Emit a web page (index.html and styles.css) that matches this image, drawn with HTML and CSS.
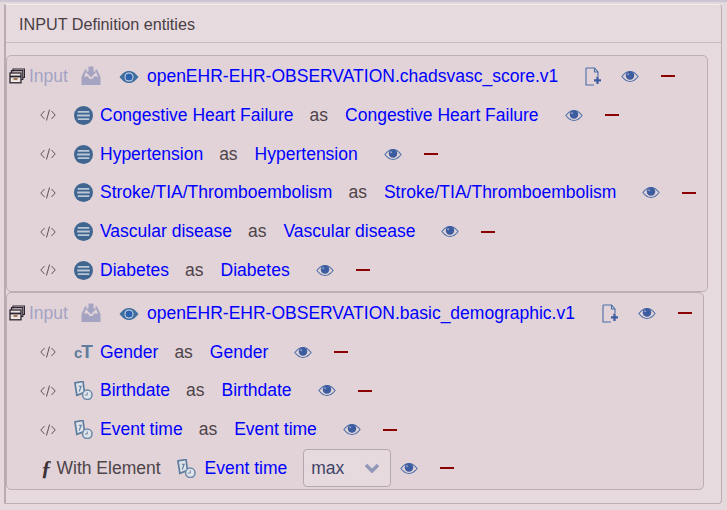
FILE: index.html
```html
<!DOCTYPE html>
<html lang="en">
<head>
    <meta charset="UTF-8">
    <title>INPUT Definition entities</title>
    <link rel="stylesheet" href="styles.css">
</head>
<body>
    <svg class="sprites" width="0" height="0">
        <symbol id="i-archive" viewBox="0 0 16 16">
            <path d="M4 3.500V1H15.500V9.500H13.500M2.500 5V2.700H13.800V11.500H12" fill="none" stroke="#2b2530" stroke-width="1.200"/>
            <rect x="1" y="5" width="11" height="9.800" fill="#efe6e2" stroke="#2b2530" stroke-width="1.300"/>
            <path d="M1 8.500H12" stroke="#2b2530" stroke-width="1.800"/>
            <path d="M4.500 11H8.500" stroke="#7a4a20" stroke-width="1.400"/>
        </symbol>
        <symbol id="i-download" viewBox="0 0 20 20">
            <path d="M7.500 .5H12.500V5.500H15.500L10 11.500L4.500 5.500H7.500Z" fill="#a5a3c2"/>
            <path d="M4 3.500H6L3 10.500H7L8.500 13H11.500L13 10.500H17L14 3.500H16L19.500 11V19H.5V11Z" fill="#a5a3c2"/>
        </symbol>
        <symbol id="i-eye" viewBox="0 0 20 14">
            <path d="M1 7C4 3 7 1.500 10 1.500S16 3 19 7C16 11 13 12.500 10 12.500S4 11 1 7Z" fill="none" stroke="#4a6ea8" stroke-width="1.200"/>
            <circle cx="10" cy="6" r="4.700" fill="#3c5ca0"/>
            <circle cx="8" cy="4.500" r="1.200" fill="#8f9cc8"/>
        </symbol>
        <symbol id="i-eye-full" viewBox="0 0 20 14">
            <path d="M.5 7C4 2.500 7 1 10 1S16 2.500 19.500 7C16 11.500 13 13 10 13S4 11.500 .5 7Z" fill="#3f6f9f"/>
            <circle cx="10" cy="7" r="4.500" fill="#d4dbe6"/>
            <circle cx="10" cy="7" r="3.500" fill="#2a62b0"/>
        </symbol>
        <symbol id="i-docplus" viewBox="0 0 16 19">
            <path d="M1 1H9.500L13 5V9M9.500 1V5H13M9 18H1V1" fill="none" stroke="#4a6ea8" stroke-width="1.100"/>
            <path d="M12.500 9.500V17M9 13.300H16" stroke="#3c5ca0" stroke-width="2.200"/>
        </symbol>
        <symbol id="i-code" viewBox="0 0 16 12">
            <path d="M4.500 2L.8 6L4.500 10M11.500 2L15.200 6L11.500 10M9.500 .5L6.500 11.500" fill="none" stroke="#5f5258" stroke-width="1"/>
        </symbol>
        <symbol id="i-list" viewBox="0 0 18 18">
            <circle cx="9" cy="9" r="9" fill="#3f6590"/>
            <path d="M3.500 5.500H14.500M3 9H15M3.500 12.500H14.500" stroke="#b9c6d6" stroke-width="1.700"/>
        </symbol>
        <symbol id="i-date" viewBox="0 0 20 20">
            <path d="M1 2L9.500 .5L11 12L3 15Z" fill="#dfe3ea" stroke="#5f7d9e" stroke-width="1.800"/>
            <path d="M5 5.500H7.500L5.500 11" fill="none" stroke="#5f7d9e" stroke-width="1.200"/>
            <circle cx="14" cy="14.500" r="5" fill="#dfe3ea" stroke="#6b88a8" stroke-width="1.600"/>
            <path d="M14 12V14.800H11.500" fill="none" stroke="#6b88a8" stroke-width="1"/>
        </symbol>
    </svg>

    <div class="panel">
        <div class="panel-head">INPUT Definition entities</div>

        <div class="group">
            <div class="row row-top">
                <svg class="ic-archive"><use href="#i-archive"/></svg>
                <span class="muted">Input</span>
                <svg class="ic-download"><use href="#i-download"/></svg>
                <svg class="ic-eye-full"><use href="#i-eye-full"/></svg>
                <a class="link">openEHR-EHR-OBSERVATION.chadsvasc_score.v1</a>
                <svg class="ic-doc"><use href="#i-docplus"/></svg>
                <svg class="ic-eye"><use href="#i-eye"/></svg>
                <span class="minus"></span>
            </div>
            <div class="row">
                <svg class="ic-code"><use href="#i-code"/></svg>
                <svg class="ic-type"><use href="#i-list"/></svg>
                <a class="link">Congestive Heart Failure</a>
                <span class="as">as</span>
                <a class="link">Congestive Heart Failure</a>
                <svg class="ic-eye after-link"><use href="#i-eye"/></svg>
                <span class="minus"></span>
            </div>
            <div class="row">
                <svg class="ic-code"><use href="#i-code"/></svg>
                <svg class="ic-type"><use href="#i-list"/></svg>
                <a class="link">Hypertension</a>
                <span class="as">as</span>
                <a class="link">Hypertension</a>
                <svg class="ic-eye after-link"><use href="#i-eye"/></svg>
                <span class="minus"></span>
            </div>
            <div class="row">
                <svg class="ic-code"><use href="#i-code"/></svg>
                <svg class="ic-type"><use href="#i-list"/></svg>
                <a class="link">Stroke/TIA/Thromboembolism</a>
                <span class="as">as</span>
                <a class="link">Stroke/TIA/Thromboembolism</a>
                <svg class="ic-eye after-link"><use href="#i-eye"/></svg>
                <span class="minus"></span>
            </div>
            <div class="row">
                <svg class="ic-code"><use href="#i-code"/></svg>
                <svg class="ic-type"><use href="#i-list"/></svg>
                <a class="link">Vascular disease</a>
                <span class="as">as</span>
                <a class="link">Vascular disease</a>
                <svg class="ic-eye after-link"><use href="#i-eye"/></svg>
                <span class="minus"></span>
            </div>
            <div class="row">
                <svg class="ic-code"><use href="#i-code"/></svg>
                <svg class="ic-type"><use href="#i-list"/></svg>
                <a class="link">Diabetes</a>
                <span class="as">as</span>
                <a class="link">Diabetes</a>
                <svg class="ic-eye after-link"><use href="#i-eye"/></svg>
                <span class="minus"></span>
            </div>
        </div>

        <div class="group group-second">
            <div class="row row-top">
                <svg class="ic-archive"><use href="#i-archive"/></svg>
                <span class="muted">Input</span>
                <svg class="ic-download"><use href="#i-download"/></svg>
                <svg class="ic-eye-full"><use href="#i-eye-full"/></svg>
                <a class="link">openEHR-EHR-OBSERVATION.basic_demographic.v1</a>
                <svg class="ic-doc"><use href="#i-docplus"/></svg>
                <svg class="ic-eye"><use href="#i-eye"/></svg>
                <span class="minus"></span>
            </div>
            <div class="row">
                <svg class="ic-code"><use href="#i-code"/></svg>
                <span class="ct"><span class="ct-small">c</span>T</span>
                <a class="link">Gender</a>
                <span class="as">as</span>
                <a class="link">Gender</a>
                <svg class="ic-eye after-link"><use href="#i-eye"/></svg>
                <span class="minus"></span>
            </div>
            <div class="row">
                <svg class="ic-code"><use href="#i-code"/></svg>
                <svg class="ic-type"><use href="#i-date"/></svg>
                <a class="link">Birthdate</a>
                <span class="as">as</span>
                <a class="link">Birthdate</a>
                <svg class="ic-eye after-link"><use href="#i-eye"/></svg>
                <span class="minus"></span>
            </div>
            <div class="row">
                <svg class="ic-code"><use href="#i-code"/></svg>
                <svg class="ic-type"><use href="#i-date"/></svg>
                <a class="link">Event time</a>
                <span class="as">as</span>
                <a class="link">Event time</a>
                <svg class="ic-eye after-link"><use href="#i-eye"/></svg>
                <span class="minus"></span>
            </div>
            <div class="row row-with">
                <span class="fx">ƒ</span>
                <span class="with">With Element</span>
                <svg class="ic-type"><use href="#i-date"/></svg>
                <a class="link">Event time</a>
                <div class="select">max
                    <svg class="chevron" viewBox="0 0 16 10"><path d="M2 2L8 8L14 2" fill="none" stroke="#9398b8" stroke-width="3.500"/></svg>
                </div>
                <svg class="ic-eye"><use href="#i-eye"/></svg>
                <span class="minus"></span>
            </div>
        </div>
    </div>
</body>
</html>
```

FILE: styles.css
```css
body { margin: 0; height: 510px; overflow: hidden; box-sizing: border-box; padding-top: 2px; background: #e6d9de; border-top: 2px solid #cbc5d4; font-family: "Liberation Sans", Arial, sans-serif; font-size: 17.5px; color: #4e4449; }
.sprites { position: absolute; }
.panel { box-sizing: border-box; width: 718px; height: 500px; margin-left: 4px; background: #e7dade; border-top: 1px solid #f3ebee; border-left: 2px solid #b9abb1; border-right: 1px solid #bdafb4; border-bottom: 1px solid #bdafb4; border-radius: 0 4px 4px 0; }
.panel-head { box-sizing: border-box; height: 38px; padding: 1px 0 0 13px; line-height: 37px; font-size: 16.200px; color: #4a3f45; border-bottom: 1px solid #c8babf; }
.group { box-sizing: border-box; width: 702px; height: 237px; margin-top: 12px; background: #e2d3d8; border: 1px solid #bcaeb3; border-radius: 5px; }
.group-second { width: 698px; height: 198px; margin-top: 0; padding-top: 1px; }

.row { display: flex; align-items: center; height: 38.750px; padding-left: 33px; white-space: nowrap; }
.row > * { flex-shrink: 0; }
.row-top { padding-left: 2px; height: 40px; }
.group-second .row-top { height: 38.750px; }
.row-with { padding-left: 34px; }

.link { color: #0000ff; }
.muted { color: #a3a3c4; margin-left: 4px; }
.as { margin: 0 17px 0 16px; }
.with { margin-left: 5px; }
.fx { font-family: "Liberation Serif", serif; font-style: italic; font-weight: bold; font-size: 21px; color: #3d3338; }
.ct { width: 18px; margin: 0 8px 0 18px; font-weight: bold; font-size: 19px; color: #5f7d9e; letter-spacing: -1px; }
.ct-small { font-size: 15px; }

.ic-archive { width: 16px; height: 16px; }
.ic-download { width: 20px; height: 20px; margin-left: 13px; }
.ic-eye-full { width: 20px; height: 14px; margin: 2px 8px 0 18px; }
.ic-doc { width: 16px; height: 19px; margin-left: 27px; }
.ic-eye { width: 18px; height: 13px; margin-left: 20px; }
.ic-eye.after-link { margin-left: 26px; }
.ic-code { width: 16px; height: 12px; }
.ic-type { width: 19px; height: 19px; margin: 0 7px 0 18px; }
.row-with .ic-type { margin: 0 9px 0 16px; }
.minus { width: 14px; height: 2px; margin-left: 22px; background: #8b0000; }

.select { display: flex; align-items: center; justify-content: space-between; box-sizing: border-box; width: 88px; height: 38px; margin-left: 16px; padding: 0 10px 0 7px; color: #3f4468; background: #e6dade; border: 1px solid #b5a8ad; border-radius: 4px; }
.chevron { width: 16px; height: 10px; }
.row-with .select + .ic-eye { margin-left: 9px; }
```
